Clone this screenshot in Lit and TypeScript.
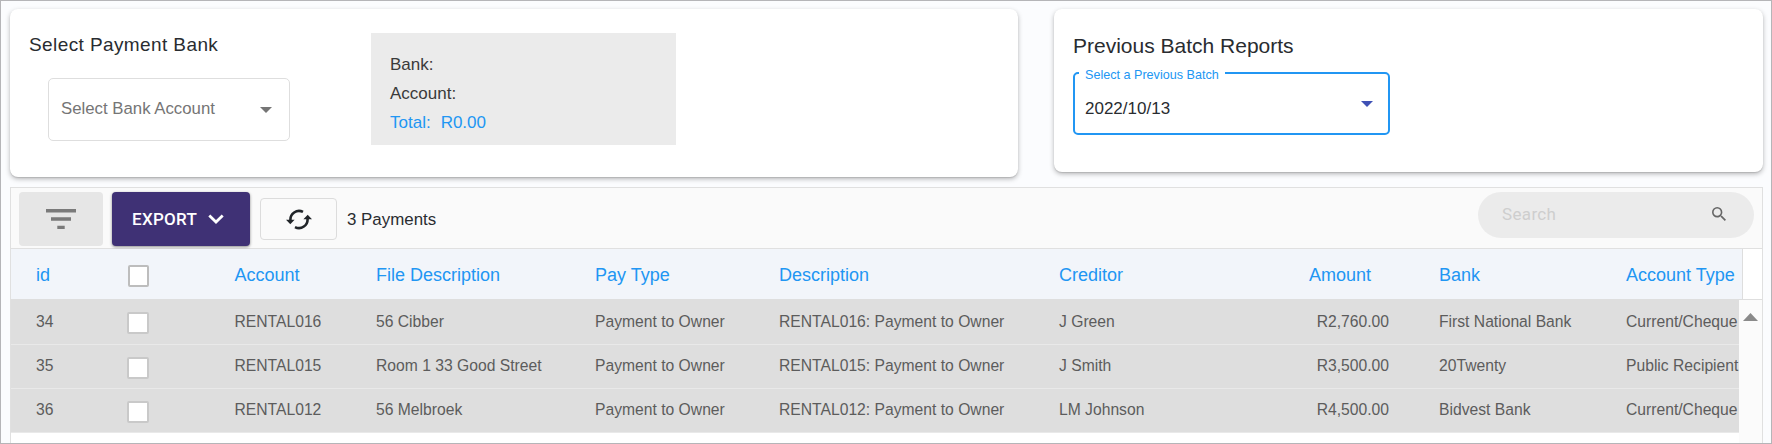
import { LitElement, html, css } from "lit";
import { customElement, state } from "lit/decorators.js";
import { classMap } from "lit/directives/class-map.js";

interface Payment {
  id: number;
  account: string;
  file: string;
  payType: string;
  creditor: string;
  amount: string;
  bank: string;
  accountType: string;
}

@customElement("bank-card")
class BankCard extends LitElement {
  static styles = css`
    :host {
      display: flex;
      box-sizing: border-box;
      background: #fff;
      border-radius: 8px;
      box-shadow: 0 2px 5px rgba(0, 0, 0, 0.28), 0 1px 1px rgba(0, 0, 0, 0.1);
    }
    .pick {
      width: 361px;
      box-sizing: border-box;
      padding: 24px 0 0 19px;
    }
    .title {
      margin: 0;
      font-size: 19px;
      font-weight: 400;
      letter-spacing: 0.4px;
      line-height: 24px;
    }
    .select {
      box-sizing: border-box;
      display: flex;
      align-items: center;
      justify-content: space-between;
      width: 242px;
      height: 63px;
      margin: 21px 0 0 19px;
      padding: 0 17px 2px 12px;
      border: 1px solid #dedede;
      border-radius: 5px;
      color: #757575;
      font-size: 16.8px;
    }
    .caret {
      margin-top: 3px;
    }
    .info {
      box-sizing: border-box;
      width: 305px;
      height: 112px;
      margin-top: 24px;
      padding: 17px 19px;
      background: #ebebeb;
      color: #3a3a3a;
      font-size: 17px;
      line-height: 29px;
    }
    .total {
      display: flex;
      gap: 10px;
      color: #2196f3;
    }
  `;

  render() {
    return html`
      <div class="pick">
        <h2 class="title">Select Payment Bank</h2>
        <div class="select">
          <span>Select Bank Account</span>
          <svg class="caret" width="12" height="6" viewBox="0 0 12 6">
            <path d="M0 0h12l-6 6z" fill="#757575" />
          </svg>
        </div>
      </div>
      <div class="info">
        <div>Bank:</div>
        <div>Account:</div>
        <div class="total"><span>Total:</span><span>R0.00</span></div>
      </div>
    `;
  }
}

@customElement("batch-card")
class BatchCard extends LitElement {
  static styles = css`
    :host {
      display: block;
      box-sizing: border-box;
      padding: 25px 0 0 19px;
      background: #fff;
      border-radius: 8px;
      box-shadow: 0 2px 5px rgba(0, 0, 0, 0.28), 0 1px 1px rgba(0, 0, 0, 0.1);
    }
    .title {
      margin: 0;
      font-size: 21px;
      font-weight: 400;
      line-height: 24px;
    }
    .select {
      position: relative;
      box-sizing: border-box;
      display: flex;
      align-items: center;
      justify-content: space-between;
      width: 317px;
      height: 63px;
      margin-top: 14px;
      padding: 0 15px 0 10px;
      border: 2px solid #2196f3;
      border-radius: 5px;
      font-size: 17px;
    }
    .label {
      position: absolute;
      left: 4px;
      top: -6px;
      padding: 0 6px;
      background: #fff;
      color: #2196f3;
      font-size: 12.6px;
      line-height: 14px;
    }
    .value {
      padding-top: 10px;
      line-height: 18px;
    }
  `;

  render() {
    return html`
      <h2 class="title">Previous Batch Reports</h2>
      <div class="select">
        <span class="label">Select a Previous Batch</span>
        <span class="value">2022/10/13</span>
        <svg width="12" height="6" viewBox="0 0 12 6">
          <path d="M0 0h12l-6 6z" fill="#3f51b5" />
        </svg>
      </div>
    `;
  }
}

@customElement("payments-grid")
class PaymentsGrid extends LitElement {
  @state() private rows: Payment[] = [
    { id: 34, account: "RENTAL016", file: "56 Cibber", payType: "Payment to Owner", creditor: "J Green", amount: "R2,760.00", bank: "First National Bank", accountType: "Current/Cheque" },
    { id: 35, account: "RENTAL015", file: "Room 1 33 Good Street", payType: "Payment to Owner", creditor: "J Smith", amount: "R3,500.00", bank: "20Twenty", accountType: "Public Recipient" },
    { id: 36, account: "RENTAL012", file: "56 Melbroek", payType: "Payment to Owner", creditor: "LM Johnson", amount: "R4,500.00", bank: "Bidvest Bank", accountType: "Current/Cheque" },
  ];

  static styles = css`
    :host {
      display: flex;
      flex-direction: column;
      box-sizing: border-box;
      border: 1px solid #e0e0e0;
      border-bottom: 0;
      background: #fff;
    }
    .toolbar {
      box-sizing: border-box;
      display: flex;
      align-items: flex-start;
      height: 61px;
      padding: 4px 8px 0;
      background: #fafafa;
      border-bottom: 1px solid #e0e0e0;
    }
    .filter,
    .export,
    .refresh {
      box-sizing: border-box;
      display: flex;
      align-items: center;
      justify-content: center;
      border-radius: 4px;
    }
    .filter {
      width: 84px;
      height: 54px;
      background: #e6e6e6;
    }
    .export {
      justify-content: space-between;
      width: 138px;
      height: 54px;
      margin-left: 9px;
      padding: 0 26px 0 20px;
      background: #3f3175;
      box-shadow: 0 1px 3px rgba(0, 0, 0, 0.45);
      color: #fff;
      font: 500 17px Roboto, sans-serif;
      letter-spacing: 0.3px;
    }
    .refresh {
      width: 77px;
      height: 42px;
      margin: 6px 0 0 10px;
      border: 1px solid #dcdcdc;
    }
    .count {
      margin: 18px 0 0 10px;
      font-size: 16.9px;
      line-height: 20px;
    }
    .search {
      box-sizing: border-box;
      display: flex;
      align-items: center;
      justify-content: space-between;
      width: 276px;
      height: 46px;
      margin-left: auto;
      padding: 0 28px 2px 24px;
      border-radius: 23px;
      background: #ebebeb;
      color: #cecece;
      font-family: Roboto, sans-serif;
      font-size: 17px;
      letter-spacing: 0.35px;
    }
    .cols {
      box-sizing: border-box;
      display: grid;
      grid-template-columns: 92px 106.5px 141.5px 219px 184px 280px 240px 90px 50px 187px 1fr;
      align-items: center;
      padding-left: 25px;
      white-space: nowrap;
      overflow: hidden;
    }
    .head {
      display: flex;
      height: 50px;
      border-bottom: 1px solid #dedede;
    }
    .head-cols {
      width: 1732px;
      background: #f2f5fa;
      border-right: 1px solid #dedede;
      color: #2196f3;
      font-size: 18px;
    }
    .head-cols > span {
      padding-top: 3px;
    }
    .num {
      text-align: right;
    }
    .head-cols > .num {
      padding-right: 18px;
    }
    .body {
      display: flex;
      flex: 1;
    }
    .rows {
      width: 1728px;
    }
    .row {
      height: 44px;
      background: #dedede;
      border-bottom: 1px solid #e9e9e9;
      color: #5c5c5c;
      font-size: 15.68px;
    }
    .row > span {
      padding-bottom: 2px;
    }
    .row.first {
      height: 45px;
    }
    .row.first > span {
      padding-bottom: 0;
    }
    .cols > .check {
      box-sizing: border-box;
      width: 22px;
      height: 22px;
      margin: 2px 0 0 -1px;
      padding: 0;
      border: 2px solid #c9c9c9;
      border-radius: 2px;
      background: #fff;
    }
    .cols > .check.all {
      width: 21px;
      margin: 4px 0 0;
      border-color: #bdbdbd;
    }
    .scroll {
      display: flex;
      flex: 1;
      justify-content: center;
      padding-top: 13px;
      background: #fbfbfb;
    }
  `;

  private renderRow(p: Payment, index: number) {
    return html`
      <div class=${classMap({ cols: true, row: true, first: index === 0 })}>
        <span>${p.id}</span>
        <span class="check"></span>
        <span>${p.account}</span>
        <span>${p.file}</span>
        <span>${p.payType}</span>
        <span>${p.account}: ${p.payType}</span>
        <span>${p.creditor}</span>
        <span class="num">${p.amount}</span>
        <span></span>
        <span>${p.bank}</span>
        <span>${p.accountType}</span>
      </div>
    `;
  }

  render() {
    return html`
      <div class="toolbar">
        <div class="filter">
          <svg width="30" height="20" viewBox="0 0 30 20" fill="#7a7a7a">
            <path d="M0 0h30v3.5H0zM5 8.3h20v3.5H5zM11.3 16.7h7.4V20h-7.4z" />
          </svg>
        </div>
        <div class="export">
          <span>EXPORT</span>
          <svg width="16" height="10" viewBox="0 0 16 10" fill="none" stroke="#fff" stroke-width="2.8">
            <path d="M1.3 1.5 8 8l6.7-6.5" />
          </svg>
        </div>
        <div class="refresh">
          <svg width="26" height="21" viewBox="0 0 26 21" fill="none" stroke="#212529" stroke-width="2.6">
            <path d="M4.500 11.500A8.600 8.600 0 0 1 17 2.900" />
            <path d="M21.500 9.500A8.600 8.600 0 0 1 9 18.100" />
            <path d="M0 10.700h8.600L4.300 15.200zM26 10.300h-8.600L21.700 5.800z" fill="#212529" stroke="none" />
          </svg>
        </div>
        <span class="count">${this.rows.length} Payments</span>
        <div class="search">
          <span>Search</span>
          <svg width="14" height="14" viewBox="3 3 17.5 17.5" fill="#666">
            <path d="M15.5 14h-.79l-.28-.27A6.471 6.471 0 0 0 16 9.500 6.500 6.500 0 1 0 9.500 16c1.610 0 3.090-.59 4.230-1.570l.27.28v.79l5 4.990L20.490 19l-4.990-5zm-6 0C7.010 14 5 11.990 5 9.500S7.010 5 9.500 5 14 7.010 14 9.500 11.990 14 9.500 14z" />
          </svg>
        </div>
      </div>
      <div class="head">
        <div class="cols head-cols">
          <span>id</span>
          <span class="check all"></span>
          <span>Account</span>
          <span>File Description</span>
          <span>Pay Type</span>
          <span>Description</span>
          <span>Creditor</span>
          <span class="num">Amount</span>
          <span></span>
          <span>Bank</span>
          <span>Account Type</span>
        </div>
      </div>
      <div class="body">
        <div class="rows">${this.rows.map((p, i) => this.renderRow(p, i))}</div>
        <div class="scroll">
          <svg width="15" height="8" viewBox="0 0 15 8"><path d="M7.5 0 15 8H0z" fill="#8a8a8a" /></svg>
        </div>
      </div>
    `;
  }
}

@customElement("app-root")
class AppRoot extends LitElement {
  static styles = css`
    :host {
      display: flex;
      flex-direction: column;
      box-sizing: border-box;
      height: 444px;
      overflow: hidden;
      border: 1px solid #b5b5b8;
      background: #fbfcfe;
      color: #292c30;
      font: 16px "Liberation Sans", Arial, sans-serif;
    }
    .cards {
      display: flex;
      align-items: flex-start;
      gap: 36px;
      height: 178px;
      padding: 8px 8px 0 9px;
    }
    .bank {
      width: 1008px;
      height: 168px;
    }
    .batch {
      flex: 1;
      height: 163px;
    }
    .grid {
      flex: 1;
      margin: 0 8px 0 9px;
    }
  `;

  render() {
    return html`
      <div class="cards">
        <bank-card class="bank"></bank-card>
        <batch-card class="batch"></batch-card>
      </div>
      <payments-grid class="grid"></payments-grid>
    `;
  }
}
